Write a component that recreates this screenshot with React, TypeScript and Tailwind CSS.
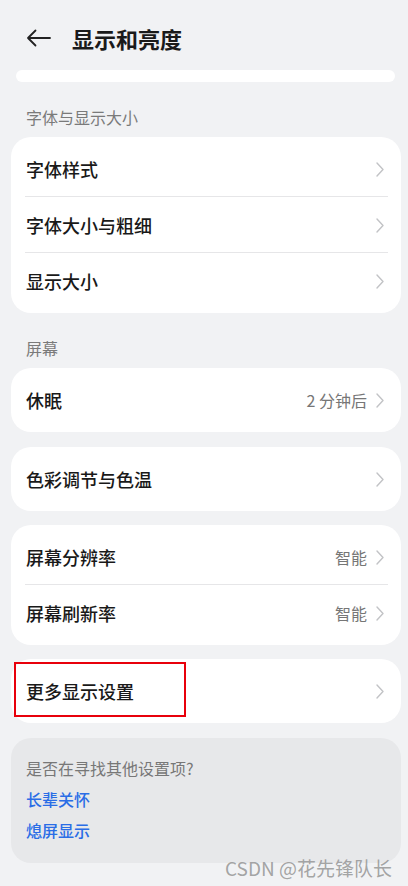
import React from 'react'

const font = { fontFamily: '"Noto Sans CJK SC", "Noto Sans", sans-serif' }

function Chevron() {
  return (
    <svg width="8" height="15" viewBox="0 0 8 15" fill="none" className="shrink-0">
      <path d="M1 1 L7 7.5 L1 14" stroke="#c2c3c6" strokeWidth="1.4" strokeLinecap="round" strokeLinejoin="round" />
    </svg>
  )
}

function Row({ title, value, divider }: { title: string; value?: string; divider?: boolean }) {
  return (
    <div className="relative flex h-[56px] items-center pl-[15px] pr-[17px]">
      <span className="flex-1 text-[18px] font-medium text-[#191919]">{title}</span>
      {value && <span className="mr-[9px] text-[16px] text-[#767676]">{value}</span>}
      <Chevron />
      {divider && <div className="absolute bottom-0 left-[14px] right-[13px] h-px bg-[#e6e6e8]" />}
    </div>
  )
}

function Card({ children }: { children: React.ReactNode }) {
  return <div className="rounded-[20px] bg-white py-[4px]">{children}</div>
}

function Label({ text }: { text: string }) {
  return <div className="px-[15px] pt-[24px] pb-[9px] text-[16px] leading-[22px] text-[#7a7a7a]">{text}</div>
}

export default function App() {
  return (
    <div className="relative min-h-[886px] w-full bg-[#f1f2f4] pb-[23px]" style={font}>
      <header className="flex h-[70px] items-center pt-[6px] pl-[26px]">
        <svg width="25" height="18" viewBox="0 0 25 18" fill="none">
          <path d="M2 9 H24 M9.5 1.5 L2 9 L9.5 16.5" stroke="#222" strokeWidth="1.8" strokeLinecap="round" strokeLinejoin="round" />
        </svg>
        <h1 className="ml-[21px] text-[22px] font-bold text-[#1a1a1a]">显示和亮度</h1>
      </header>

      <main className="pl-[11px] pr-[7px]">
        <div className="ml-[5px] mr-[6px] h-[12px] rounded-full bg-white" />

        <Label text="字体与显示大小" />
        <Card>
          <Row title="字体样式" divider />
          <Row title="字体大小与粗细" divider />
          <Row title="显示大小" />
        </Card>

        <Label text="屏幕" />
        <Card>
          <Row title="休眠" value="2 分钟后" />
        </Card>

        <div className="mt-[15px]">
          <Card>
            <Row title="色彩调节与色温" />
          </Card>
        </div>

        <div className="mt-[14px]">
          <Card>
            <Row title="屏幕分辨率" value="智能" divider />
            <Row title="屏幕刷新率" value="智能" />
          </Card>
        </div>

        <div className="relative mt-[14px]">
          <Card>
            <Row title="更多显示设置" />
          </Card>
          <div className="pointer-events-none absolute left-[3px] top-[3px] h-[55px] w-[172px] border-2 border-[#e8000b]" />
        </div>

        <div className="mt-[15px] flex flex-col gap-[7px] rounded-[20px] bg-[#e7e8ea] px-[15px] pt-[18px] pb-[21px] leading-[24px]">
          <span className="text-[16px] text-[#777]">是否在寻找其他设置项?</span>
          <span className="text-[16px] font-medium text-[#2a6de6]">长辈关怀</span>
          <span className="text-[16px] font-medium text-[#2a6de6]">熄屏显示</span>
        </div>
      </main>

      <div className="pointer-events-none absolute right-[16px] top-[854px] text-[19px] leading-[28px] text-[#9a9a9a]/90">
        CSDN @花先锋队长
      </div>
    </div>
  )
}
